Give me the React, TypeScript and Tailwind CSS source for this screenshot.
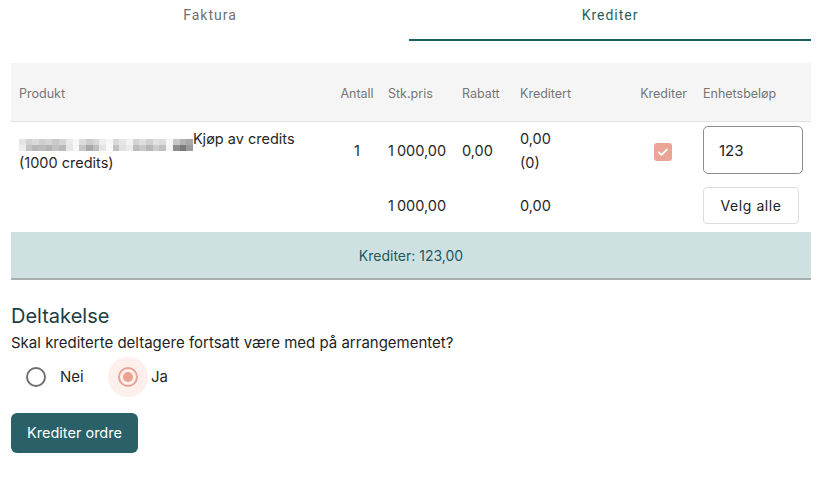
import { useState } from "react";

// pixelated placeholder for the blurred event name
const BLUR_TOP = [
  "#e4e4e4", "#d2d2d2", "#dadada", "#cfcfcf", "#d6d6d6", "#c9c9c9", "#d4d4d4", "#e9e9e9",
  "#f7f7f7", "#dcdcdc", "#cdcdcd", "#d8d8d8", "#ededed", "#f8f8f8", "#d9d9d9", "#e6e6e6",
  "#f2f2f2", "#d3d3d3", "#dedede", "#d0d0d0", "#e1e1e1", "#dbdbdb", "#f7f7f7", "#c8c8c8",
  "#b2b2b2", "#a8a8a8",
];
const BLUR_BOT = [
  "#ececec", "#c4c4c4", "#b8b8b8", "#bcbcbc", "#b3b3b3", "#c2c2c2", "#b9b9b9", "#e6e6e6",
  "#f7f7f7", "#c6c6c6", "#a9a9a9", "#bfbfbf", "#e4e4e4", "#f8f8f8", "#c1c1c1", "#e1e1e1",
  "#ebebeb", "#bdbdbd", "#c8c8c8", "#b7b7b7", "#cccccc", "#c0c0c0", "#f5f5f5", "#8e8e8e",
  "#7a7a7a", "#9b9b9b",
];

function BlurredName() {
  return (
    <span className="inline-flex flex-col align-[-1px]">
      <span className="flex">
        {BLUR_TOP.map((c, i) => (
          <span key={i} className="block w-[6.7px] h-[6px]" style={{ background: c }} />
        ))}
      </span>
      <span className="flex">
        {BLUR_BOT.map((c, i) => (
          <span key={i} className="block w-[6.7px] h-[6px]" style={{ background: c }} />
        ))}
      </span>
    </span>
  );
}

function Amount({ head, tail }: { head: string; tail: string }) {
  return (
    <>
      {head}
      <span className="ml-[3px]">{tail}</span>
    </>
  );
}

function Tabs() {
  return (
    <div className="flex h-[41px]">
      <button className="w-[398px] pb-[10px] text-center text-[14px] tracking-[0.07em] text-[#707070] font-['Roboto',sans-serif] h-full">
        Faktura
      </button>
      <button className="w-[402px] pb-[8px] text-center text-[14px] tracking-[0.07em] text-[#1f5f64] font-['Roboto',sans-serif] h-full border-b-2 border-[#1c5f66]">
        Krediter
      </button>
    </div>
  );
}

export default function App() {
  const [answer, setAnswer] = useState<"nei" | "ja">("ja");

  return (
    <div className="w-[824px] h-[478px] bg-white px-[11px] font-['Inter','Liberation_Sans',sans-serif] text-[#262626]">
      <Tabs />

      <table className="w-[800px] mt-[22px] table-fixed border-collapse">
        <colgroup>
          <col className="w-[319px]" />
          <col className="w-[50px]" />
          <col className="w-[74px]" />
          <col className="w-[58px]" />
          <col className="w-[112px]" />
          <col className="w-[71px]" />
          <col className="w-[116px]" />
        </colgroup>
        <thead>
          <tr className="h-[58px] bg-[#f5f5f5] border-b border-[#e2e2e2] text-[12.5px] text-[#767676]">
            <th className="px-2 pt-[5px] text-left font-normal">Produkt</th>
            <th className="pl-1 pr-0 pt-[5px] text-center font-normal">Antall</th>
            <th className="px-2 pt-[5px] text-left font-normal">Stk.pris</th>
            <th className="px-2 pt-[5px] text-left font-normal">Rabatt</th>
            <th className="px-2 pt-[5px] text-left font-normal">Kreditert</th>
            <th className="px-2 pt-[5px] text-right font-normal">Krediter</th>
            <th className="px-2 pt-[5px] text-left font-normal">Enhetsbeløp</th>
          </tr>
        </thead>
        <tbody className="text-[14.5px] leading-6">
          <tr className="h-[56px]">
            <td className="px-2 pt-[3px] align-middle">
              <BlurredName />
              Kjøp av credits
              <br />
              (1000 credits)
            </td>
            <td className="pl-1 pt-[3px] text-center">1</td>
            <td className="px-2 pt-[3px]">
              <Amount head="1" tail="000,00" />
            </td>
            <td className="px-2 pt-[3px]">0,00</td>
            <td className="px-2 pt-[3px]">
              0,00
              <br />
              (0)
            </td>
            <td className="pl-2 pr-[23px] pt-[3px] text-right">
              <span className="inline-flex w-[18px] h-[18px] rounded-[3px] bg-[#eba597] items-center justify-center align-middle">
                <svg viewBox="0 0 24 24" className="w-[14px] h-[14px]" fill="none" stroke="white" strokeWidth="3" strokeLinecap="round" strokeLinejoin="round">
                  <path d="M5 12.5l4.5 4.5L19 7.5" />
                </svg>
              </span>
            </td>
            <td className="px-2 pt-[2px]">
              <input
                defaultValue="123"
                className="w-[100px] h-[48px] rounded-[5px] border border-[#8d8d8d] px-[15px] text-[15px] text-[#222] outline-none"
              />
            </td>
          </tr>
          <tr className="h-[55px]">
            <td />
            <td />
            <td className="px-2 pt-[2px]">
              <Amount head="1" tail="000,00" />
            </td>
            <td />
            <td className="px-2 pt-[2px]">0,00</td>
            <td />
            <td className="px-2 pt-[2px]">
              <button className="w-[96px] h-[37px] rounded-[4px] border border-[#dcdcdc] text-[14px] tracking-[0.04em] text-[#222]">
                Velg alle
              </button>
            </td>
          </tr>
        </tbody>
      </table>

      <div className="w-[800px] h-[48px] bg-[#cfe0e0] border-b-2 border-[#a9aeae] flex items-center justify-center text-[14px] text-[#22595d]">
        Krediter: 123,00
      </div>

      <h2 className="mt-[22px] text-[20px] leading-7 text-[#1c3d3f]">Deltakelse</h2>
      <p className="mt-[1px] text-[15px] leading-6 text-[#1f1f1f]">Skal krediterte deltagere fortsatt være med på arrangementet?</p>

      <div className="flex items-center h-[44px] text-[15px]">
        <label className="flex items-center cursor-pointer" onClick={() => setAnswer("nei")}>
          <span className="w-[42px] h-[42px] ml-[4px] rounded-full flex items-center justify-center">
            <span className={`w-[20px] h-[20px] rounded-full border-2 flex items-center justify-center ${answer === "nei" ? "border-[#eaa393]" : "border-[#707070]"}`}>
              {answer === "nei" && <span className="w-[10px] h-[10px] rounded-full bg-[#eaa393]" />}
            </span>
          </span>
          <span className="ml-[3px] w-[48px]">Nei</span>
        </label>
        <label className="flex items-center cursor-pointer" onClick={() => setAnswer("ja")}>
          <span className={`w-[40px] h-[40px] rounded-full flex items-center justify-center ${answer === "ja" ? "bg-[#fdefec]" : ""}`}>
            <span className={`w-[20px] h-[20px] rounded-full border-2 flex items-center justify-center ${answer === "ja" ? "border-[#eaa393]" : "border-[#707070]"}`}>
              {answer === "ja" && <span className="w-[10px] h-[10px] rounded-full bg-[#eaa393]" />}
            </span>
          </span>
          <span className="ml-[3px]">Ja</span>
        </label>
      </div>

      <button className="mt-[14px] w-[127px] h-[40px] rounded-[6px] bg-[#2a6068] text-white text-[14.5px]">
        Krediter ordre
      </button>
    </div>
  );
}
